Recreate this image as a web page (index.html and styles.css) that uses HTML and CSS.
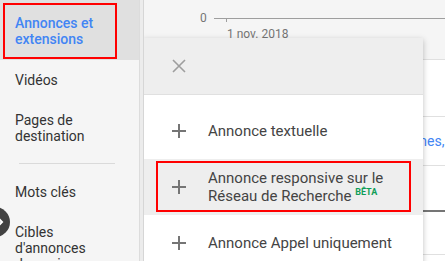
FILE: index.html
```html
<!DOCTYPE html>
<html lang="fr">
  <head>
    <meta charset="UTF-8" />
    <title>Annonces et extensions</title>
    <link rel="stylesheet" href="styles.css">
  </head>
  <body>
    <div class="page">
      <nav class="sidebar">
        <div class="nav-item active">
          <span class="nav-label">Annonces et extensions</span>
        </div>
        <div class="nav-item">Vidéos</div>
        <div class="nav-item">Pages de<br>destination</div>
        <hr class="nav-divider">
        <div class="nav-item">Mots clés</div>
        <div class="nav-item">Cibles<br>d'annonces<br>dynamiques</div>
        <button class="collapse-btn" aria-label="Afficher">
          <svg width="8" height="10" viewBox="0 0 8 10"><path d="M2 1l4 4-4 4" fill="none" stroke="#fff" stroke-width="2"/></svg>
        </button>
      </nav>
      <div class="scroll-strip"></div>

      <main class="content">
        <div class="chart">
          <div class="axis">
            <span class="axis-zero">0</span>
            <span class="axis-line"></span>
          </div>
          <div class="axis-date">1 nov. 2018</div>
        </div>
        <div class="table">
          <div class="row row-first"></div>
          <div class="row"><span class="row-link">Campagnes,</span></div>
          <div class="row row-head"></div>
          <div class="row row-last"></div>
        </div>

        <!-- New ad menu -->
        <div class="menu">
          <div class="menu-header">
            <svg class="close-icon" width="14" height="14" viewBox="0 0 14 14"><path d="M1 1l12 12M13 1L1 13" stroke="#9e9e9e" stroke-width="1.6"/></svg>
          </div>
          <ul class="menu-list">
            <li class="menu-item">
              <svg class="plus-icon" width="14" height="14" viewBox="0 0 14 14"><path d="M7 0v14M0 7h14" stroke="#757575" stroke-width="2"/></svg>
              <span>Annonce textuelle</span>
            </li>
            <li class="menu-item selected">
              <svg class="plus-icon" width="14" height="14" viewBox="0 0 14 14"><path d="M7 0v14M0 7h14" stroke="#757575" stroke-width="2"/></svg>
              <span>Annonce responsive sur le<br>Réseau de Recherche <sup class="beta">BÊTA</sup></span>
            </li>
            <li class="menu-item">
              <svg class="plus-icon" width="14" height="14" viewBox="0 0 14 14"><path d="M7 0v14M0 7h14" stroke="#757575" stroke-width="2"/></svg>
              <span>Annonce Appel uniquement</span>
            </li>
          </ul>
        </div>
      </main>
    </div>
  </body>
</html>
```

FILE: styles.css
```css
* {
  margin: 0;
  padding: 0;
  box-sizing: border-box;
}

body {
  font-family: Roboto, 'Liberation Sans', sans-serif;
  background: #fff;
  color: #333;
  overflow: hidden;
}

.page {
  display: flex;
  height: 261px;
  overflow: hidden;
}

/* Sidebar */
.sidebar {
  position: relative;
  width: 140px;
  flex-shrink: 0;
  background: #f5f5f5;
  border-right: 1px solid #dcdcdc;
  font-size: 14px;
  line-height: 16px;
}

.nav-item {
  padding: 12px 15px;
}

.nav-item.active {
  background: #e0e0e0;
  padding: 3px 22px 1px 3px;
  color: #4285f4;
  font-weight: 500;
}

.nav-label {
  display: block;
  border: 2px solid #f00;
  padding: 10px 10px;
}

.nav-divider {
  border: none;
  border-top: 1px solid #dadada;
  margin: 7px 24px 8px 19px;
}

.collapse-btn {
  position: absolute;
  left: -20px;
  top: 207px;
  width: 30px;
  height: 30px;
  border-radius: 50%;
  border: none;
  background: #424242;
  display: flex;
  align-items: center;
  justify-content: flex-end;
  padding-right: 6px;
}

.scroll-strip {
  width: 4px;
  flex-shrink: 0;
  background: #ececec;
  border-right: 1px solid #d6d6d6;
}

/* Main content */
.content {
  position: relative;
  flex: 1;
  overflow: hidden;
}

.chart {
  height: 60px;
  background: #f5f5f5;
  border-bottom: 1px solid #e0e0e0;
  padding: 11px 0 0 56px;
  font-size: 12px;
  color: #757575;
}

.axis {
  display: flex;
  align-items: center;
  gap: 7px;
}

.axis-line {
  position: relative;
  flex: 1;
  height: 1px;
  background: #9e9e9e;
}

.axis-line::after {
  content: '';
  position: absolute;
  left: 12px;
  top: 1px;
  width: 1px;
  height: 3px;
  background: #9e9e9e;
}

.axis-date {
  margin: 2px 0 0 27px;
}

.row {
  height: 49px;
  border-bottom: 1px solid #e0e0e0;
  font-size: 14px;
  color: #4285f4;
}

.row-first {
  height: 57px;
}

.row-link {
  display: block;
  padding: 16px 0 0 223px;
  white-space: nowrap;
}

.row-head {
  height: 46px;
  border-bottom: 2px solid #757575;
}

.row-last {
  height: 43px;
}

/* Menu */
.menu {
  position: absolute;
  left: -1px;
  top: 38px;
  width: 280px;
  background: #fff;
  box-shadow: 0 2px 6px rgba(0, 0, 0, 0.25);
  font-size: 15px;
  line-height: 18px;
  color: #444;
}

.menu-header {
  height: 57px;
  background: #eeeeee;
  border-bottom: 1px solid #e0e0e0;
  display: flex;
  align-items: center;
  padding-left: 29px;
}

.menu-list {
  list-style: none;
  padding-top: 8px;
}

.menu-item {
  position: relative;
  display: flex;
  align-items: center;
  gap: 22px;
  padding: 19px 0 19px 29px;
}

.menu-item.selected {
  background: #eeeeee;
  padding: 10px 0 10px 29px;
}

.menu-item.selected::after {
  content: '';
  position: absolute;
  top: 2px;
  bottom: 3px;
  left: 13px;
  right: 12px;
  border: 2px solid #f00;
}

.plus-icon {
  flex-shrink: 0;
}

.beta {
  font-size: 9px;
  font-weight: 700;
  color: #0f9d58;
  vertical-align: 6px;
  line-height: 0;
}
```
